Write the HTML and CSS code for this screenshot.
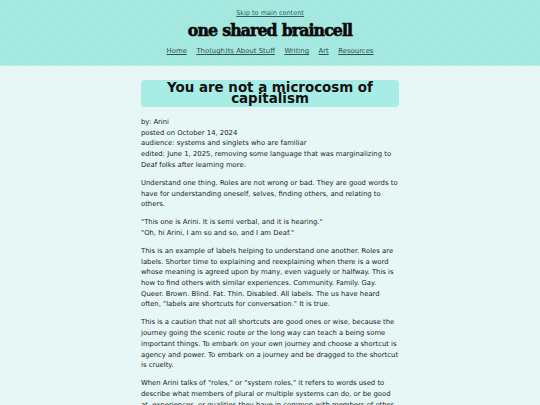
FILE: index.html
```html
<!DOCTYPE html>
<html lang="en">
<head>
<meta charset="utf-8">
<title>You are not a microcosm of capitalism</title>
<link rel="stylesheet" href="styles.css">
</head>
<body>
<header class="site-header">
  <a class="skip" href="#main">Skip to main content</a>
  <div class="site-title">one shared braincell</div>
  <nav class="nav">
    <a href="#">Home</a>
    <a href="#">Tho(ugh)ts About Stuff</a>
    <a href="#">Writing</a>
    <a href="#">Art</a>
    <a href="#">Resources</a>
  </nav>
</header>
<main id="main" class="content">
  <h1 class="post-title">You are not a microcosm of capitalism</h1>
  <p class="meta">by: Arini<br>posted on October 14, 2024<br>audience: systems and singlets who are familiar<br>edited: June 1, 2025, removing some language that was marginalizing to Deaf folks after learning more.</p>
  <p>Understand one thing. Roles are not wrong or bad. They are good words to have for understanding oneself, selves, finding others, and relating to others.</p>
  <p>"This one is Arini. It is semi verbal, and it is hearing."<br>"Oh, hi Arini, I am so and so, and I am Deaf."</p>
  <p>This is an example of labels helping to understand one another. Roles are labels. Shorter time to explaining and reexplaining when there is a word whose meaning is agreed upon by many, even vaguely or halfway. This is how to find others with similar experiences. Community. Family. Gay. Queer. Brown. Blind. Fat. Thin. Disabled. All labels. The us have heard often, "labels are shortcuts for conversation." It is true.</p>
  <p>This is a caution that not all shortcuts are good ones or wise, because the journey going the scenic route or the long way can teach a being some important things. To embark on your own journey and choose a shortcut is agency and power. To embark on a journey and be dragged to the shortcut is cruelty.</p>
  <p>When Arini talks of "roles," or "system roles," it refers to words used to describe what members of plural or multiple systems can do, or be good at, experiences, or qualities they have in common with members of other systems.</p>
</main>
</body>
</html>
```
FILE: styles.css
```css
html, body {
  margin: 0;
  padding: 0;
}
body {
  background: #e6f7f5;
  font-family: "DejaVu Sans", Verdana, sans-serif;
  color: #1b2323;
}
.site-header {
  background-color: #a2e8df;
  background-image:
    linear-gradient(45deg, rgba(255,255,255,0.06) 25%, transparent 25%, transparent 75%, rgba(255,255,255,0.06) 75%),
    linear-gradient(45deg, rgba(255,255,255,0.06) 25%, transparent 25%, transparent 75%, rgba(255,255,255,0.06) 75%);
  background-size: 16px 16px;
  background-position: 0 0, 8px 8px;
  height: 66px;
  display: flex;
  flex-direction: column;
  align-items: center;
  padding-top: 9px;
  box-sizing: border-box;
  border-bottom: 1px solid #b8ede6;
}
.skip {
  font-size: 6.5px;
  color: #2f5f5c;
  line-height: 8px;
}
.site-title {
  font-family: "DejaVu Serif", serif;
  font-stretch: condensed;
  font-weight: 900;
  font-size: 17.5px;
  letter-spacing: -0.9px;
  word-spacing: 0.5px;
  -webkit-text-stroke: 0.6px #0a0a0a;
  color: #0a0a0a;
  line-height: 20px;
  margin-top: 3px;
}
.nav {
  display: flex;
  gap: 9.5px;
  margin-top: 7px;
}
.nav a {
  font-size: 6.9px;
  color: #2f5050;
  line-height: 9px;
}
.content {
  width: 258px;
  margin: 0 auto;
  padding-top: 14px;
  font-size: 6.85px;
  line-height: 10.7px;
}
.post-title {
  background: #a8ece6;
  border-radius: 4px;
  margin: 0 0 10px;
  text-align: center;
  font-size: 13.4px;
  line-height: 11px;
  padding: 2px 4px 3px;
  color: #111;
}
.content p {
  margin: 0 0 7.3px;
}
```
